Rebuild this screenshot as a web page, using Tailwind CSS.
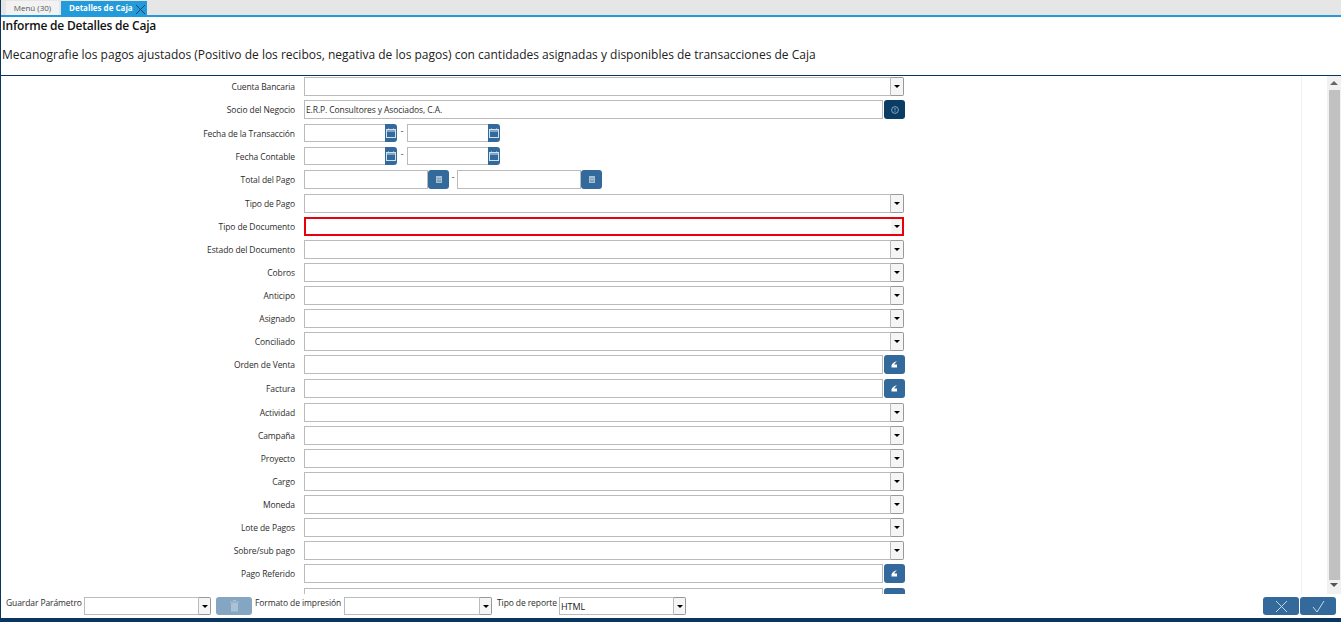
<!DOCTYPE html>
<html lang="es">
<head>
    <meta charset="UTF-8">
    <title>Detalles de Caja</title>
    <script src="https://cdn.jsdelivr.net/npm/@tailwindcss/browser@4"></script>
</head>
<body class="bg-white">
<div class="w-[1341px] h-[622px] overflow-hidden flex flex-col font-['Open_Sans',sans-serif] text-[#2d2d2d] border-l border-[#0a3560]">
    <!-- tabs -->
    <div class="h-[15px] bg-[#e6e6e6] flex items-end pl-[5px] gap-[2px] shrink-0">
        <div class="w-[53px] h-[14px] bg-[#f2f2f2] text-[8px] text-center leading-[14px] text-[#555] whitespace-nowrap">Menú (30)</div>
        <div class="w-[86px] h-[14px] bg-[#239ad9] text-[8px] font-bold text-white leading-[14px] pl-[8px] flex items-center justify-between pr-px whitespace-nowrap">
            <span>Detalles de Caja</span>
            <svg class="w-[11px] h-[11px] mt-[2px]" viewBox="0 0 11 11" fill="none" stroke="#0d4a70" stroke-width="1"><path d="M1 1l9 9M10 1l-9 9"/></svg>
        </div>
    </div>
    <div class="h-[2px] bg-[#239ad9] shrink-0"></div>
    <!-- header -->
    <div class="h-[59px] shrink-0 border-b border-[#0a3560] pl-px">
        <h1 class="text-[12px] font-semibold tracking-[-0.2px] text-[#111] leading-[18px]">Informe de Detalles de Caja</h1>
        <p class="text-[12px] leading-[18px] mt-[11px] text-[#222]">Mecanografie los pagos ajustados (Positivo de los recibos, negativa de los pagos) con cantidades asignadas y disponibles de transacciones de Caja</p>
    </div>
    <!-- form -->
    <div class="flex-1 min-h-0 flex overflow-hidden relative">
        <div class="flex-1 text-[8.5px] tracking-[-0.1px] pt-px">
            <div class="flex items-center h-[19px] mb-[4px]"><label class="w-[294px] text-right mt-[1px]">Cuenta Bancaria</label><div class="ml-[9px] w-[600px] h-[19px] flex"><div class="flex-1 border border-[#bbb]"></div><div class="w-[13px] bg-[#f5f5f5] border border-l-0 border-[#999] rounded-r-[2px] flex items-center justify-center"><span class="w-0 h-0 border-x-[3px] border-x-transparent border-t-[3px] border-t-black"></span></div></div></div>
            <div class="flex items-center h-[19px] mb-[5px]"><label class="w-[294px] text-right mt-[1px]">Socio del Negocio</label><div class="ml-[9px] w-[601px] h-[19px] flex gap-px"><div class="flex-1 border border-[#bbb] pl-[1px] leading-[17px]">E.R.P. Consultores y Asociados, C.A.</div><div class="w-[21px] bg-[#0b3c66] rounded-[3px] flex items-center justify-center"><svg class="w-[8px] h-[8px]" viewBox="0 0 8 8" fill="none" stroke="#8fb0cc" stroke-width="0.9"><circle cx="4" cy="4" r="3.4"/><path d="M4 2v2.4M4 5.2v.8"/></svg></div></div></div>
            <div class="flex items-center h-[18px] mb-[5px]"><label class="w-[294px] text-right mt-[3px]">Fecha de la Transacción</label><div class="ml-[9px] flex h-[18px]"><div class="w-[82px] border border-[#bbb]"></div><div class="w-[12px] -ml-px bg-[#336a9b] rounded-r-[3px] flex items-center justify-center"><svg class="w-[10px] h-[10px]" viewBox="0 0 10 10" fill="none" stroke="#cfe0ee" stroke-width="1"><rect x="0.5" y="1.5" width="9" height="8"/><path d="M0.5 3h9M2.5 0.5v1M7.5 0.5v1"/></svg></div></div><span class="w-[10px] text-center -mt-[4px]">-</span><div class="flex h-[18px]"><div class="w-[82px] border border-[#bbb]"></div><div class="w-[12px] -ml-px bg-[#336a9b] rounded-r-[3px] flex items-center justify-center"><svg class="w-[10px] h-[10px]" viewBox="0 0 10 10" fill="none" stroke="#cfe0ee" stroke-width="1"><rect x="0.5" y="1.5" width="9" height="8"/><path d="M0.5 3h9M2.5 0.5v1M7.5 0.5v1"/></svg></div></div></div>
            <div class="flex items-center h-[18px] mb-[5px]"><label class="w-[294px] text-right mt-[3px]">Fecha Contable</label><div class="ml-[9px] flex h-[18px]"><div class="w-[82px] border border-[#bbb]"></div><div class="w-[12px] -ml-px bg-[#336a9b] rounded-r-[3px] flex items-center justify-center"><svg class="w-[10px] h-[10px]" viewBox="0 0 10 10" fill="none" stroke="#cfe0ee" stroke-width="1"><rect x="0.5" y="1.5" width="9" height="8"/><path d="M0.5 3h9M2.5 0.5v1M7.5 0.5v1"/></svg></div></div><span class="w-[10px] text-center -mt-[4px]">-</span><div class="flex h-[18px]"><div class="w-[82px] border border-[#bbb]"></div><div class="w-[12px] -ml-px bg-[#336a9b] rounded-r-[3px] flex items-center justify-center"><svg class="w-[10px] h-[10px]" viewBox="0 0 10 10" fill="none" stroke="#cfe0ee" stroke-width="1"><rect x="0.5" y="1.5" width="9" height="8"/><path d="M0.5 3h9M2.5 0.5v1M7.5 0.5v1"/></svg></div></div></div>
            <div class="flex items-center h-[19px] mb-[5px]"><label class="w-[294px] text-right mt-[1px]">Total del Pago</label><div class="ml-[9px] flex h-[19px]"><div class="w-[124px] border border-[#bbb]"></div><div class="w-[21px] bg-[#336a9b] rounded-[3px] flex items-center justify-center"><svg class="w-[6px] h-[7px]" viewBox="0 0 6 7" fill="#a5bfd5"><path d="M0 0h6v7H0z"/><path d="M1 2h4v1H1zM1 4h4v2H1z" fill="#7fa0bd"/></svg></div></div><span class="w-[8px] text-center -mt-[4px]">-</span><div class="flex h-[19px]"><div class="w-[124px] border border-[#bbb]"></div><div class="w-[21px] bg-[#336a9b] rounded-[3px] flex items-center justify-center"><svg class="w-[6px] h-[7px]" viewBox="0 0 6 7" fill="#a5bfd5"><path d="M0 0h6v7H0z"/><path d="M1 2h4v1H1zM1 4h4v2H1z" fill="#7fa0bd"/></svg></div></div></div>
            <div class="flex items-center h-[19px] mb-[4px]"><label class="w-[294px] text-right mt-[1px]">Tipo de Pago</label><div class="ml-[9px] w-[600px] h-[19px] flex"><div class="flex-1 border border-[#bbb]"></div><div class="w-[13px] bg-[#f5f5f5] border border-l-0 border-[#999] rounded-r-[2px] flex items-center justify-center"><span class="w-0 h-0 border-x-[3px] border-x-transparent border-t-[3px] border-t-black"></span></div></div></div>
            <div class="flex items-center h-[19px] mb-[4px]"><label class="w-[294px] text-right mt-[1px]">Tipo de Documento</label><div class="ml-[9px] w-[600px] h-[19px] flex border-2 border-[#e8000b]"><div class="flex-1"></div><div class="w-[11px] bg-[#f5f5f5] flex items-center justify-center"><span class="w-0 h-0 border-x-[3px] border-x-transparent border-t-[3px] border-t-black"></span></div></div></div>
            <div class="flex items-center h-[19px] mb-[4px]"><label class="w-[294px] text-right mt-[1px]">Estado del Documento</label><div class="ml-[9px] w-[600px] h-[19px] flex"><div class="flex-1 border border-[#bbb]"></div><div class="w-[13px] bg-[#f5f5f5] border border-l-0 border-[#999] rounded-r-[2px] flex items-center justify-center"><span class="w-0 h-0 border-x-[3px] border-x-transparent border-t-[3px] border-t-black"></span></div></div></div>
            <div class="flex items-center h-[19px] mb-[4px]"><label class="w-[294px] text-right mt-[1px]">Cobros</label><div class="ml-[9px] w-[600px] h-[19px] flex"><div class="flex-1 border border-[#bbb]"></div><div class="w-[13px] bg-[#f5f5f5] border border-l-0 border-[#999] rounded-r-[2px] flex items-center justify-center"><span class="w-0 h-0 border-x-[3px] border-x-transparent border-t-[3px] border-t-black"></span></div></div></div>
            <div class="flex items-center h-[19px] mb-[4px]"><label class="w-[294px] text-right mt-[1px]">Anticipo</label><div class="ml-[9px] w-[600px] h-[19px] flex"><div class="flex-1 border border-[#bbb]"></div><div class="w-[13px] bg-[#f5f5f5] border border-l-0 border-[#999] rounded-r-[2px] flex items-center justify-center"><span class="w-0 h-0 border-x-[3px] border-x-transparent border-t-[3px] border-t-black"></span></div></div></div>
            <div class="flex items-center h-[19px] mb-[4px]"><label class="w-[294px] text-right mt-[1px]">Asignado</label><div class="ml-[9px] w-[600px] h-[19px] flex"><div class="flex-1 border border-[#bbb]"></div><div class="w-[13px] bg-[#f5f5f5] border border-l-0 border-[#999] rounded-r-[2px] flex items-center justify-center"><span class="w-0 h-0 border-x-[3px] border-x-transparent border-t-[3px] border-t-black"></span></div></div></div>
            <div class="flex items-center h-[19px] mb-[4px]"><label class="w-[294px] text-right mt-[1px]">Conciliado</label><div class="ml-[9px] w-[600px] h-[19px] flex"><div class="flex-1 border border-[#bbb]"></div><div class="w-[13px] bg-[#f5f5f5] border border-l-0 border-[#999] rounded-r-[2px] flex items-center justify-center"><span class="w-0 h-0 border-x-[3px] border-x-transparent border-t-[3px] border-t-black"></span></div></div></div>
            <div class="flex items-center h-[19px] mb-[5px]"><label class="w-[294px] text-right mt-[1px]">Orden de Venta</label><div class="ml-[9px] w-[601px] h-[19px] flex gap-px"><div class="flex-1 border border-[#bbb]"></div><div class="w-[21px] bg-[#336a9b] rounded-[3px] flex items-center justify-center"><svg class="w-[7px] h-[7px]" viewBox="0 0 7 7" fill="#fff"><path d="M6 0C3.5 0.8 1 2.5 0.5 4.5V6.5H6V3.5H3.2C3.8 2.2 5 1 6 0z"/></svg></div></div></div>
            <div class="flex items-center h-[19px] mb-[5px]"><label class="w-[294px] text-right mt-[1px]">Factura</label><div class="ml-[9px] w-[601px] h-[19px] flex gap-px"><div class="flex-1 border border-[#bbb]"></div><div class="w-[21px] bg-[#336a9b] rounded-[3px] flex items-center justify-center"><svg class="w-[7px] h-[7px]" viewBox="0 0 7 7" fill="#fff"><path d="M6 0C3.5 0.8 1 2.5 0.5 4.5V6.5H6V3.5H3.2C3.8 2.2 5 1 6 0z"/></svg></div></div></div>
            <div class="flex items-center h-[19px] mb-[4px]"><label class="w-[294px] text-right mt-[1px]">Actividad</label><div class="ml-[9px] w-[600px] h-[19px] flex"><div class="flex-1 border border-[#bbb]"></div><div class="w-[13px] bg-[#f5f5f5] border border-l-0 border-[#999] rounded-r-[2px] flex items-center justify-center"><span class="w-0 h-0 border-x-[3px] border-x-transparent border-t-[3px] border-t-black"></span></div></div></div>
            <div class="flex items-center h-[19px] mb-[4px]"><label class="w-[294px] text-right mt-[1px]">Campaña</label><div class="ml-[9px] w-[600px] h-[19px] flex"><div class="flex-1 border border-[#bbb]"></div><div class="w-[13px] bg-[#f5f5f5] border border-l-0 border-[#999] rounded-r-[2px] flex items-center justify-center"><span class="w-0 h-0 border-x-[3px] border-x-transparent border-t-[3px] border-t-black"></span></div></div></div>
            <div class="flex items-center h-[19px] mb-[4px]"><label class="w-[294px] text-right mt-[1px]">Proyecto</label><div class="ml-[9px] w-[600px] h-[19px] flex"><div class="flex-1 border border-[#bbb]"></div><div class="w-[13px] bg-[#f5f5f5] border border-l-0 border-[#999] rounded-r-[2px] flex items-center justify-center"><span class="w-0 h-0 border-x-[3px] border-x-transparent border-t-[3px] border-t-black"></span></div></div></div>
            <div class="flex items-center h-[19px] mb-[4px]"><label class="w-[294px] text-right mt-[1px]">Cargo</label><div class="ml-[9px] w-[600px] h-[19px] flex"><div class="flex-1 border border-[#bbb]"></div><div class="w-[13px] bg-[#f5f5f5] border border-l-0 border-[#999] rounded-r-[2px] flex items-center justify-center"><span class="w-0 h-0 border-x-[3px] border-x-transparent border-t-[3px] border-t-black"></span></div></div></div>
            <div class="flex items-center h-[19px] mb-[4px]"><label class="w-[294px] text-right mt-[1px]">Moneda</label><div class="ml-[9px] w-[600px] h-[19px] flex"><div class="flex-1 border border-[#bbb]"></div><div class="w-[13px] bg-[#f5f5f5] border border-l-0 border-[#999] rounded-r-[2px] flex items-center justify-center"><span class="w-0 h-0 border-x-[3px] border-x-transparent border-t-[3px] border-t-black"></span></div></div></div>
            <div class="flex items-center h-[19px] mb-[4px]"><label class="w-[294px] text-right mt-[1px]">Lote de Pagos</label><div class="ml-[9px] w-[600px] h-[19px] flex"><div class="flex-1 border border-[#bbb]"></div><div class="w-[13px] bg-[#f5f5f5] border border-l-0 border-[#999] rounded-r-[2px] flex items-center justify-center"><span class="w-0 h-0 border-x-[3px] border-x-transparent border-t-[3px] border-t-black"></span></div></div></div>
            <div class="flex items-center h-[19px] mb-[4px]"><label class="w-[294px] text-right mt-[1px]">Sobre/sub pago</label><div class="ml-[9px] w-[600px] h-[19px] flex"><div class="flex-1 border border-[#bbb]"></div><div class="w-[13px] bg-[#f5f5f5] border border-l-0 border-[#999] rounded-r-[2px] flex items-center justify-center"><span class="w-0 h-0 border-x-[3px] border-x-transparent border-t-[3px] border-t-black"></span></div></div></div>
            <div class="flex items-center h-[19px] mb-[5px]"><label class="w-[294px] text-right mt-[1px]">Pago Referido</label><div class="ml-[9px] w-[601px] h-[19px] flex gap-px"><div class="flex-1 border border-[#bbb]"></div><div class="w-[21px] bg-[#336a9b] rounded-[3px] flex items-center justify-center"><svg class="w-[7px] h-[7px]" viewBox="0 0 7 7" fill="#fff"><path d="M6 0C3.5 0.8 1 2.5 0.5 4.5V6.5H6V3.5H3.2C3.8 2.2 5 1 6 0z"/></svg></div></div></div>
            <div class="flex items-center h-[19px]"><label class="w-[294px] text-right mt-[1px]">Pago Asignado</label><div class="ml-[9px] w-[601px] h-[19px] flex gap-px"><div class="flex-1 border border-[#bbb]"></div><div class="w-[21px] bg-[#336a9b] rounded-[3px]"></div></div></div>
        </div>
        <div class="w-px bg-[#f2f2f2] absolute right-[39px] top-0 bottom-0"></div>
        <!-- scrollbar -->
        <div class="w-[14px] bg-[#f1f1f1] flex flex-col items-center shrink-0 relative">
            <span class="w-0 h-0 border-x-[4px] border-x-transparent border-b-[4px] border-b-[#666] mt-[5px]"></span>
            <div class="w-[11px] h-[490px] bg-[#c1c1c1] mt-[5px]"></div>
            <span class="w-0 h-0 border-x-[4px] border-x-transparent border-t-[4px] border-t-[#555] mt-[3px]"></span>
        </div>
    </div>
    <!-- footer -->
    <div class="h-[24px] shrink-0 bg-white flex items-start text-[8.5px] tracking-[-0.1px] whitespace-nowrap pl-[5px] pt-[3px]">
        <span class="w-[78px] leading-[14px] -mt-[1px]">Guardar Parámetro</span>
        <div class="w-[127px] h-[18px] flex"><div class="flex-1 border border-[#bbb]"></div><div class="w-[12px] bg-[#f5f5f5] border border-l-0 border-[#999] rounded-r-[2px] flex items-center justify-center"><span class="w-0 h-0 border-x-[3px] border-x-transparent border-t-[3px] border-t-black"></span></div></div>
        <div class="w-[36px] h-[18px] ml-[5px] bg-[#84a6c3] rounded-[3px] flex items-center justify-center"><svg class="w-[9px] h-[12px]" viewBox="0 0 9 12" fill="#a9c2d6"><path d="M0 1.5h9v1H0zM3 0h3v1H3zM1 3h7v8.5H1z"/></svg></div>
        <span class="ml-[3px] w-[89px] leading-[14px] -mt-[1px]">Formato de impresión</span>
        <div class="w-[148px] h-[18px] flex"><div class="flex-1 border border-[#bbb]"></div><div class="w-[12px] bg-[#f5f5f5] border border-l-0 border-[#999] rounded-r-[2px] flex items-center justify-center"><span class="w-0 h-0 border-x-[3px] border-x-transparent border-t-[3px] border-t-black"></span></div></div>
        <span class="ml-[5px] w-[62px] leading-[14px] -mt-[1px]">Tipo de reporte</span>
        <div class="w-[127px] h-[18px] flex"><div class="flex-1 border border-[#bbb] pl-px text-[9px] leading-[17px] text-[#222]">HTML</div><div class="w-[12px] bg-[#f5f5f5] border border-l-0 border-[#999] rounded-r-[2px] flex items-center justify-center"><span class="w-0 h-0 border-x-[3px] border-x-transparent border-t-[3px] border-t-black"></span></div></div>
        <div class="ml-auto flex gap-px pr-[5px]">
            <div class="w-[36px] h-[18px] bg-[#336a9b] rounded-[3px] flex items-center justify-center"><svg class="w-[13px] h-[13px]" viewBox="0 0 13 13" fill="none" stroke="#c5d7e6"><path d="M1 1l11 11M12 1L1 12"/></svg></div>
            <div class="w-[36px] h-[18px] bg-[#336a9b] rounded-[3px] flex items-center justify-center"><svg class="w-[13px] h-[13px]" viewBox="0 0 13 13" fill="none" stroke="#c5d7e6"><path d="M1 7l4 5 7-11"/></svg></div>
        </div>
    </div>
    <div class="h-[4px] shrink-0 bg-[#0a3560] -ml-px"></div>
</div>
</body>
</html>
